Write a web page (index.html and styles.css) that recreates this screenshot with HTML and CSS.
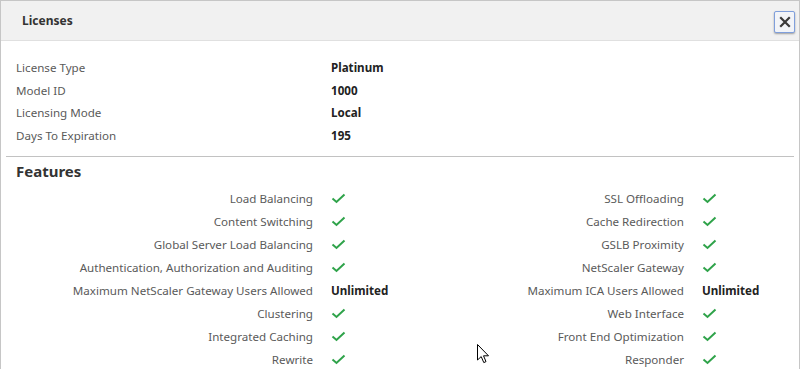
FILE: index.html
```html
<!DOCTYPE html>
<html lang="en">
<head>
    <meta charset="UTF-8">
    <title>Licenses</title>
    <link rel="stylesheet" href="styles.css">
</head>
<body>
    <div class="dialog">
        <div class="dialog-header">
            <h2>Licenses</h2>
            <button class="close-btn" title="Close">
                <svg width="12" height="12" viewBox="0 0 12 12"><path d="M2 2 L10 10 M10 2 L2 10" stroke="#3a3a3a" stroke-width="2.2" stroke-linecap="square"/></svg>
            </button>
        </div>

        <div class="info">
            <span class="label">License Type</span><span class="value">Platinum</span>
            <span class="label">Model ID</span><span class="value">1000</span>
            <span class="label">Licensing Mode</span><span class="value">Local</span>
            <span class="label">Days To Expiration</span><span class="value">195</span>
        </div>

        <hr class="divider">

        <h3 class="section-title">Features</h3>
        <div class="features" id="features"></div>
    </div>

    <!-- mouse pointer in the screenshot -->
    <svg class="cursor" width="13" height="20" viewBox="0 0 13 20">
        <path d="M0.5 0.5 L0.5 16 L4.2 12.6 L6.8 18.6 L9 17.6 L6.5 11.8 L11.5 11.8 Z" fill="#fff" stroke="#000" stroke-width="1" stroke-linejoin="miter"/>
    </svg>

    <script>
        const features = [
            ["Load Balancing", true], ["SSL Offloading", true],
            ["Content Switching", true], ["Cache Redirection", true],
            ["Global Server Load Balancing", true], ["GSLB Proximity", true],
            ["Authentication, Authorization and Auditing", true], ["NetScaler Gateway", true],
            ["Maximum NetScaler Gateway Users Allowed", "Unlimited"], ["Maximum ICA Users Allowed", "Unlimited"],
            ["Clustering", true], ["Web Interface", true],
            ["Integrated Caching", true], ["Front End Optimization", true],
            ["Rewrite", true], ["Responder", true]
        ];

        const check = '<svg class="check" width="15" height="11" viewBox="0 0 15 11"><path d="M1.5 5.5 L5.5 9 L13.5 1.5" fill="none" stroke="#2fa34a" stroke-width="2"/></svg>';

        document.getElementById('features').innerHTML = features.map(([name, val]) => `
            <div class="feature">
                <span class="label">${name}</span>
                <span class="value">${val === true ? check : val}</span>
            </div>`).join('');
    </script>
</body>
</html>
```
FILE: styles.css
```css
body {
    margin: 0;
    font-family: "Noto Sans", "Open Sans", Arial, sans-serif;
    font-size: 11.6px;
    color: #555;
    background: #fff;
    overflow: hidden;
}

.dialog {
    box-sizing: border-box;
    height: 100vh;
    overflow: hidden;
    border: 1px solid #c6c6c6;
    border-bottom: none;
    background: #fff;
}

.dialog-header {
    display: flex;
    align-items: center;
    justify-content: space-between;
    height: 39px;
    padding: 0 4px 0 21px;
    background: #f1f1f1;
    border-bottom: 1px solid #e0e0e0;
}

.dialog-header h2 {
    margin: 0;
    font-size: 12px;
    font-weight: bold;
    color: #333;
}

.close-btn {
    width: 21px;
    height: 22px;
    padding: 0;
    margin-top: 2px;
    display: flex;
    align-items: center;
    justify-content: center;
    background: #f2f4f8;
    border: 1px solid #7f9fdc;
    border-radius: 2px;
    box-shadow: 0 1px 2px rgba(0, 0, 0, 0.35);
    cursor: pointer;
}

.info {
    display: grid;
    grid-template-columns: 315px 1fr;
    grid-auto-rows: 22.7px;
    align-items: center;
    padding: 15px 15px 9px;
}

.label {
    color: #5a5a5a;
}

.value {
    font-weight: bold;
    color: #222;
}

.divider {
    margin: 0 5px;
    border: none;
    border-top: 1px solid #c2c2c2;
}

.section-title {
    margin: 1px 0 3px 15px;
    height: 26px;
    line-height: 26px;
    font-size: 15px;
    font-weight: bold;
    color: #333;
}

.features {
    display: grid;
    grid-template-columns: repeat(2, 371px);
    grid-auto-rows: 23px;
    padding: 0 15px;
}

.feature {
    display: grid;
    grid-template-columns: 297px 1fr;
    column-gap: 18px;
    align-items: center;
}

.feature .label {
    text-align: right;
}

.feature .value {
    display: flex;
    align-items: center;
}

.check {
    display: block;
}

.cursor {
    position: absolute;
    left: 477px;
    top: 344px;
}
```
